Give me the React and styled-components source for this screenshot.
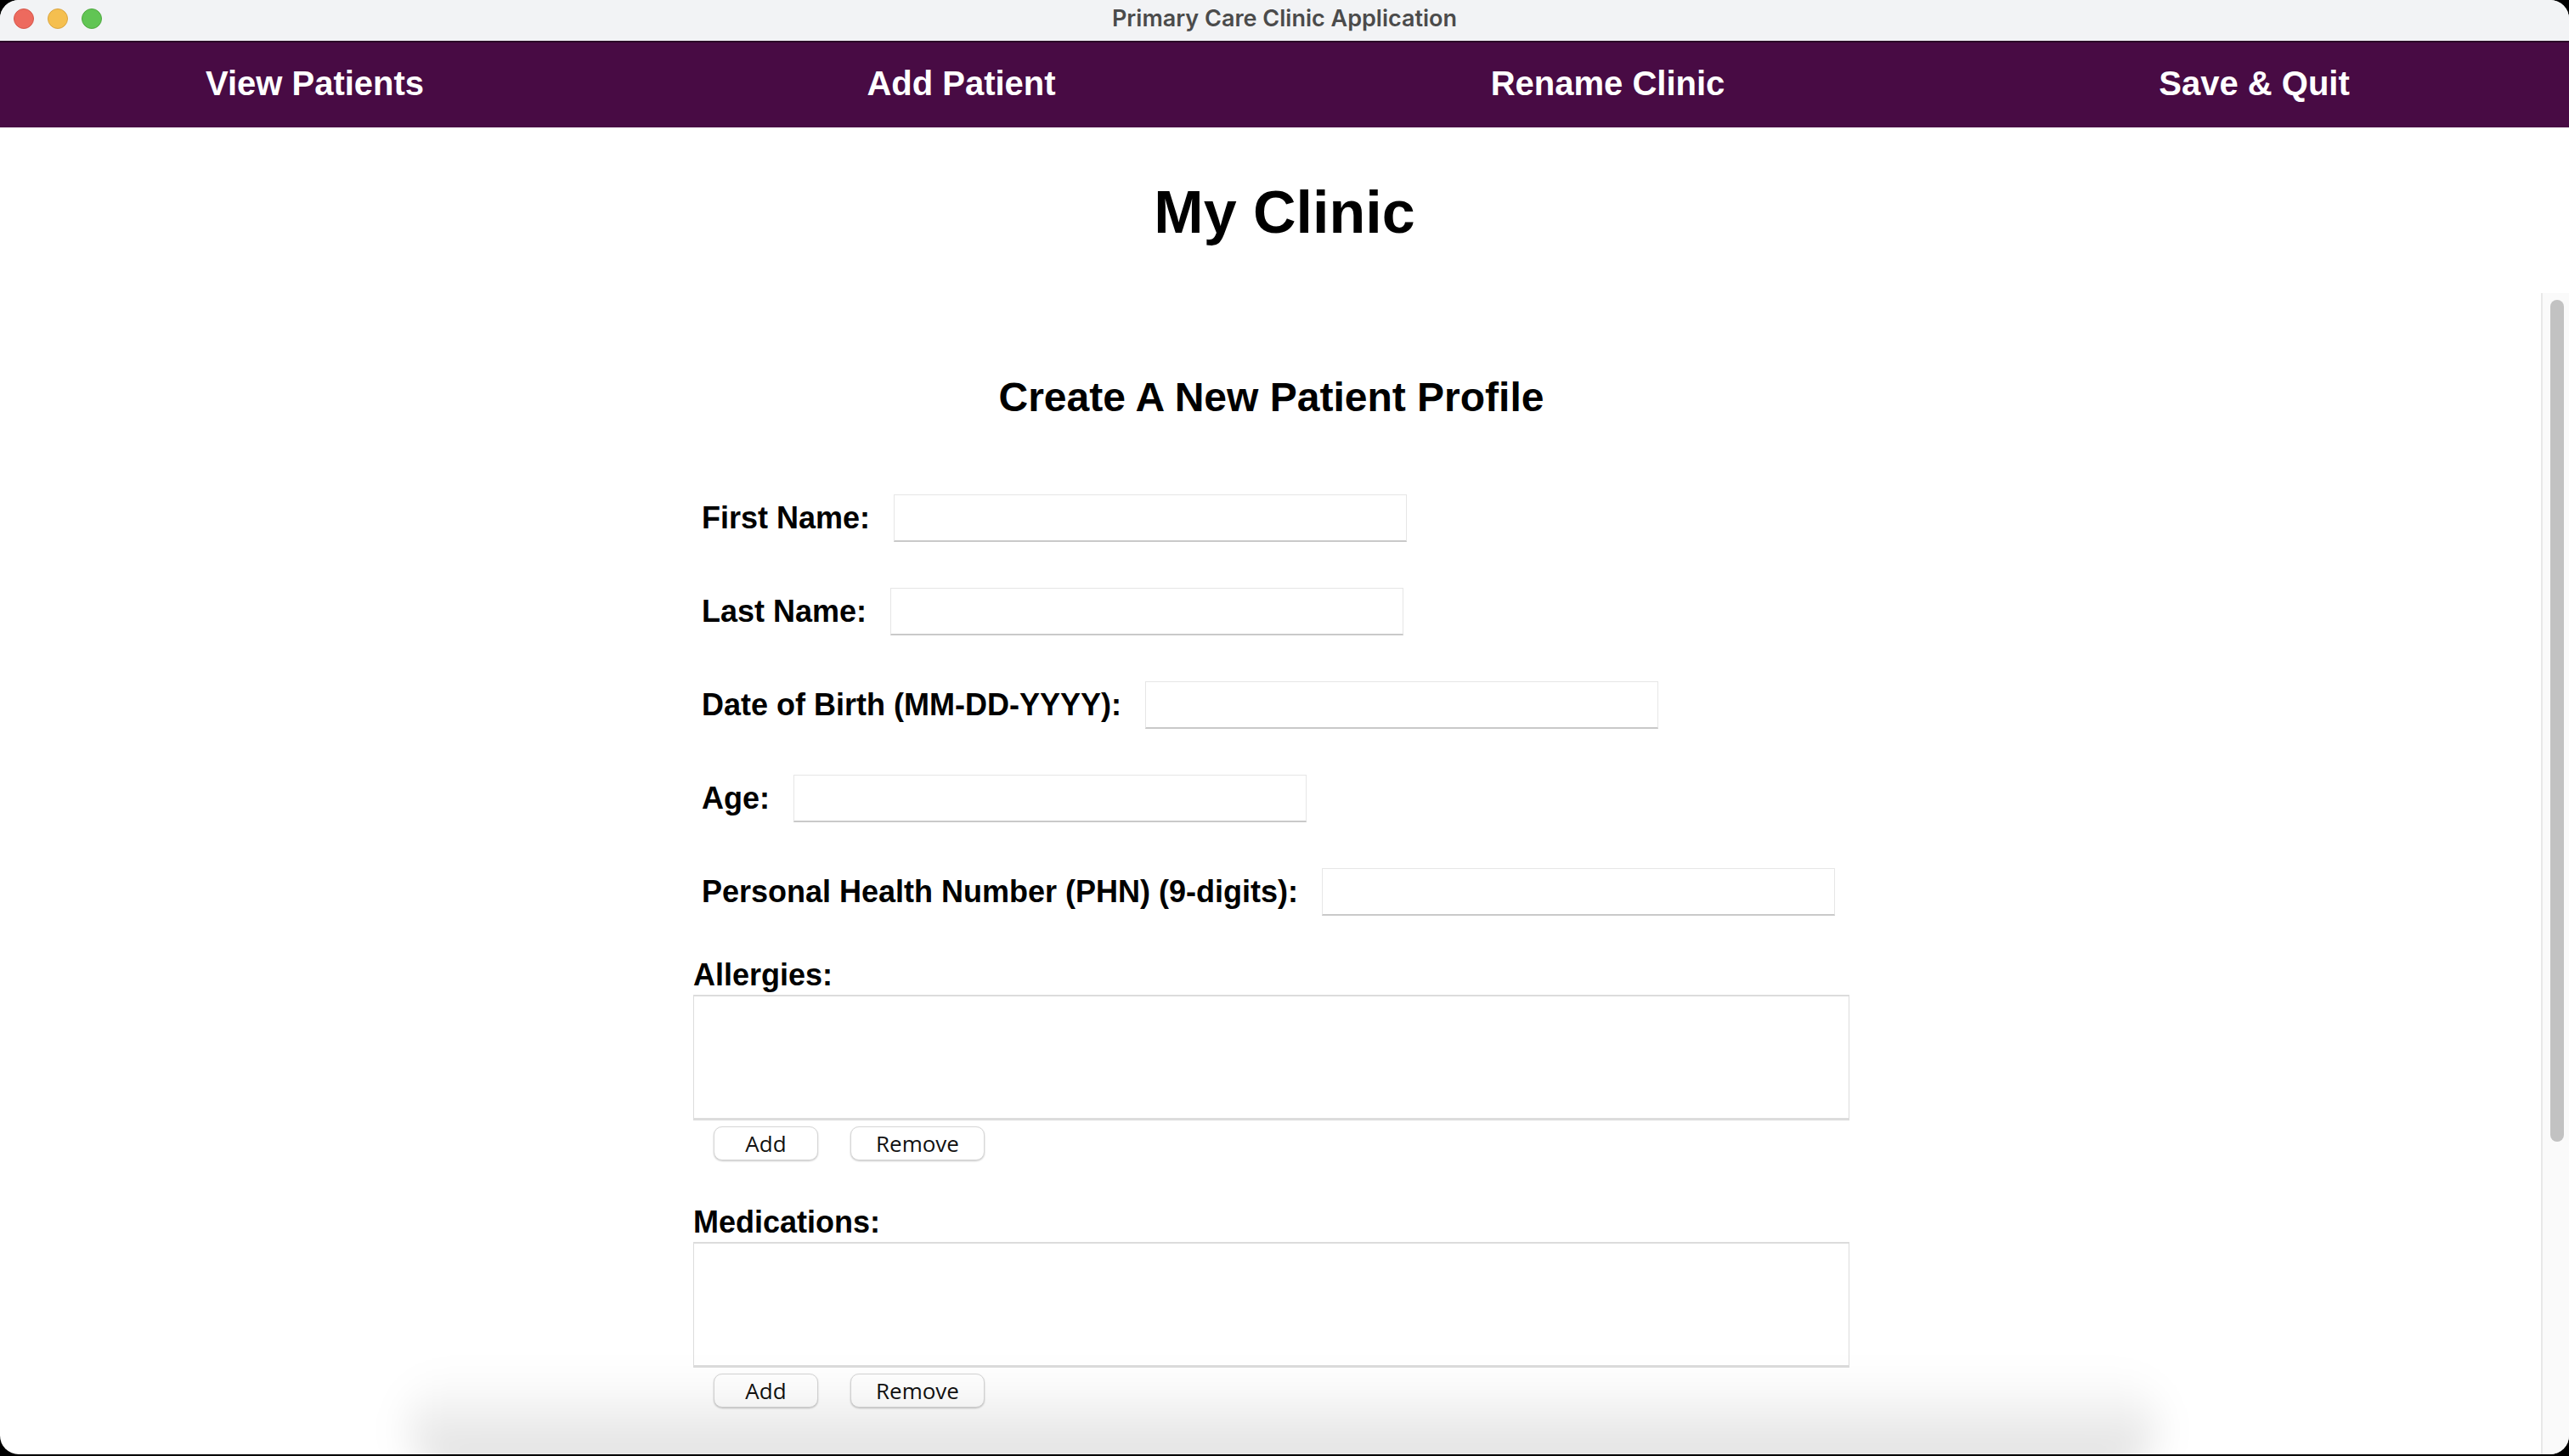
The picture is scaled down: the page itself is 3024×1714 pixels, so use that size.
import React from "react"
import styled, { createGlobalStyle } from "styled-components"

const GlobalStyle = createGlobalStyle`
  html, body {
    margin: 0;
    padding: 0;
    background: #000;
  }
  * {
    box-sizing: border-box;
  }
`

const navItems = ["View Patients", "Add Patient", "Rename Clinic", "Save & Quit"]

const fields = [
  "First Name:",
  "Last Name:",
  "Date of Birth (MM-DD-YYYY):",
  "Age:",
  "Personal Health Number (PHN) (9-digits):",
]

function ListSection({ title, first }) {
  return (
    <Section $first={first}>
      <SectionLabel>{title}</SectionLabel>
      <ListBox />
      <ButtonRow>
        <SmallButton $width={123}>Add</SmallButton>
        <SmallButton $width={158}>Remove</SmallButton>
      </ButtonRow>
    </Section>
  )
}

export default function App() {
  return (
    <>
      <GlobalStyle />
      <Window>
        <TitleBar>
          <Lights>
            <Light $color="#ed6a5e" $edge="#d5574b" />
            <Light $color="#f5bf4f" $edge="#d9a441" />
            <Light $color="#61c554" $edge="#4fa83f" />
          </Lights>
          <WindowTitle>Primary Care Clinic Application</WindowTitle>
          <span />
        </TitleBar>
        <Nav>
          <NavGrid>
            {navItems.map(item => (
              <NavButton key={item}>{item}</NavButton>
            ))}
          </NavGrid>
        </Nav>
        <ClinicName>My Clinic</ClinicName>
        <ScrollPane>
          <ScrollContent>
            <Form>
              <FormTitle>Create A New Patient Profile</FormTitle>
              <Fields>
                {fields.map(label => (
                  <FieldRow key={label}>
                    <FieldLabel>{label}</FieldLabel>
                    <TextField />
                  </FieldRow>
                ))}
              </Fields>
              <ListSection title="Allergies:" first />
              <ListSection title="Medications:" />
            </Form>
          </ScrollContent>
          <ScrollTrack>
            <ScrollThumb />
          </ScrollTrack>
        </ScrollPane>
        <DockShadow />
      </Window>
    </>
  )
}

const Window = styled.div`
  position: relative;
  width: 3024px;
  height: 1712px;
  background: #fff;
  border-radius: 22px;
  overflow: hidden;
  display: flex;
  flex-direction: column;
`
const TitleBar = styled.div`
  height: 50px;
  flex-shrink: 0;
  display: grid;
  grid-template-columns: 1fr auto 1fr;
  align-items: center;
  padding-bottom: 6px;
  background: #f2f3f5;
  border-bottom: 2px solid #2a0626;
`
const Lights = styled.div`
  display: flex;
  gap: 16px;
  padding-left: 16px;
  padding-top: 2px;
`
const Light = styled.span`
  width: 24px;
  height: 24px;
  border-radius: 50%;
  background: ${p => p.$color};
  border: 1px solid ${p => p.$edge};
`
const WindowTitle = styled.div`
  font-family: Inter, "Liberation Sans", sans-serif;
  font-weight: 600;
  font-size: 27px;
  color: #4b4b4b;
`
const Nav = styled.nav`
  height: 100px;
  flex-shrink: 0;
  background: #480b44;
`
const NavGrid = styled.div`
  height: 100%;
  margin: 0 -10px;
  padding-bottom: 3px;
  display: grid;
  grid-template-columns: repeat(4, 1fr);
  align-items: center;
`
const NavButton = styled.div`
  text-align: center;
  font-family: "Liberation Sans", Arial, sans-serif;
  font-weight: bold;
  font-size: 40px;
  color: #fff;
`
const ClinicName = styled.h1`
  margin: 65px 0 0;
  height: 130px;
  flex-shrink: 0;
  text-align: center;
  font-family: "Liberation Sans", Arial, sans-serif;
  font-weight: bold;
  font-size: 70px;
  line-height: 1;
  color: #000;
`
const ScrollPane = styled.div`
  flex: 1;
  display: flex;
  min-height: 0;
`
const ScrollContent = styled.div`
  flex: 1;
  overflow: hidden;
`
const Form = styled.div`
  width: 1361px;
  margin: 0 auto;
  padding-top: 99px;
  transform: translateX(1px);
  font-family: "Liberation Sans", Arial, sans-serif;
  color: #000;
`
const FormTitle = styled.h2`
  margin: 0 0 90px;
  text-align: center;
  font-weight: bold;
  font-size: 48px;
  line-height: 1;
`
const Fields = styled.div`
  display: flex;
  flex-direction: column;
  gap: 54px;
  padding-left: 10px;
`
const FieldRow = styled.div`
  display: flex;
  align-items: center;
  gap: 28px;
  height: 56px;
`
const FieldLabel = styled.label`
  font-weight: bold;
  font-size: 36px;
  white-space: nowrap;
`
const TextField = styled.div`
  width: 604px;
  height: 56px;
  background: #fff;
  border: 1px solid #e6e6e6;
  border-bottom: 2px solid #c9c9c9;
`
const Section = styled.div`
  margin-top: ${p => (p.$first ? "52px" : "55px")};
`
const SectionLabel = styled.div`
  font-weight: bold;
  font-size: 36px;
  line-height: 1;
  margin-bottom: 5px;
`
const ListBox = styled.div`
  height: 148px;
  background: #fff;
  border: 1px solid #dcdcdc;
  border-top-width: 2px;
  border-bottom-width: 3px;
`
const ButtonRow = styled.div`
  display: flex;
  gap: 38px;
  margin-top: 7px;
  padding-left: 24px;
`
const SmallButton = styled.button`
  width: ${p => p.$width}px;
  height: 40px;
  padding: 0;
  background: #fff;
  border: 1px solid #d6d6d6;
  border-radius: 10px;
  box-shadow: 0 1px 2px rgba(0, 0, 0, 0.22);
  font-family: "Open Sans", "DejaVu Sans", sans-serif;
  font-size: 26px;
  color: #111;
`
const ScrollTrack = styled.div`
  width: 33px;
  flex-shrink: 0;
  background: #fafafa;
  border-left: 2px solid #e8e8e8;
  padding: 8px 0 0 9px;
`
const ScrollThumb = styled.div`
  width: 16px;
  height: 991px;
  border-radius: 8px;
  background: #c2c2c2;
`
const DockShadow = styled.div`
  position: absolute;
  left: 480px;
  width: 2060px;
  bottom: -24px;
  height: 120px;
  border-radius: 60px;
  background: linear-gradient(to bottom, rgba(0, 0, 0, 0), rgba(0, 0, 0, 0.14));
  filter: blur(22px);
  pointer-events: none;
`
